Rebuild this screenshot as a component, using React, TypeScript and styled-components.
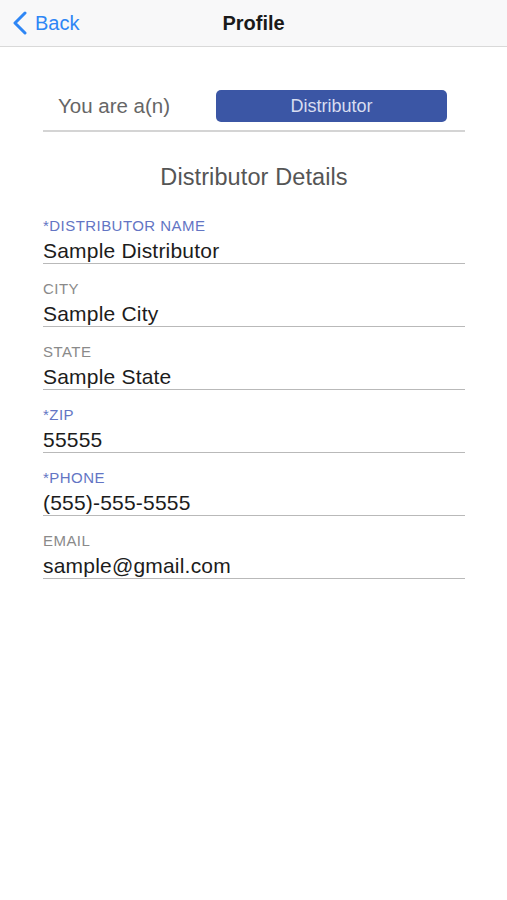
import React from "react"
import styled, { createGlobalStyle } from "styled-components"

const GlobalStyle = createGlobalStyle`
  body {
    margin: 0;
    background: #ffffff;
    font-family: "Liberation Sans", Arial, sans-serif;
  }
`

const Page = styled.div`
  width: 507px;
  min-height: 900px;
  background: #ffffff;
`

const NavBar = styled.div`
  height: 46px;
  background: #f8f8f9;
  border-bottom: 1px solid #d9d9d9;
  display: flex;
  align-items: center;
  position: relative;

  .back {
    display: flex;
    align-items: center;
    padding-left: 12px;
    color: #2e86f5;
    font-size: 20px;
    gap: 7px;
  }

  .title {
    position: absolute;
    left: 0;
    right: 0;
    text-align: center;
    font-size: 20px;
    font-weight: bold;
    color: #1a1a1a;
    pointer-events: none;
  }
`

const Content = styled.div`
  padding: 0 42px 0 43px;
`

const RoleRow = styled.div`
  margin-top: 43px;
  display: flex;
  align-items: center;
  padding: 0 18px 8px 15px;
  border-bottom: 2px solid #d4d4d4;

  .label {
    font-size: 20.5px;
    color: #666666;
  }
`

const RoleButton = styled.div`
  margin-left: auto;
  width: 231px;
  height: 32px;
  border-radius: 5px;
  background: #3b56a5;
  color: #d8ddf0;
  font-size: 18px;
  display: flex;
  align-items: center;
  justify-content: center;
`

const SectionTitle = styled.div`
  margin-top: 30px;
  margin-bottom: 25px;
  line-height: 30px;
  text-align: center;
  font-size: 23.5px;
  letter-spacing: 0.1px;
  color: #555555;
`

const Field = styled.div<{ required?: boolean }>`
  margin-bottom: 16px;
  border-bottom: 1px solid #b9b9b9;

  .label {
    height: 18px;
    line-height: 18px;
    font-size: 15px;
    letter-spacing: 0.45px;
    color: ${(props) => (props.required ? "#6375c4" : "#8a8a8a")};
  }

  .value {
    margin-top: 4px;
    height: 24px;
    line-height: 24px;
    font-size: 21px;
    color: #1c1c1c;
    letter-spacing: 0.2px;
  }
`

const fields = [
  { label: "*DISTRIBUTOR NAME", value: "Sample Distributor", required: true },
  { label: "CITY", value: "Sample City" },
  { label: "STATE", value: "Sample State" },
  { label: "*ZIP", value: "55555", required: true },
  { label: "*PHONE", value: "(555)-555-5555", required: true },
  { label: "EMAIL", value: "sample@gmail.com" },
]

const App = () => {
  return (
    <Page>
      <GlobalStyle />
      <NavBar>
        <div className="back">
          <svg width="16" height="24" viewBox="0 0 16 24">
            <path
              d="M13 2 L3 12 L13 22"
              fill="none"
              stroke="#2e86f5"
              strokeWidth="3"
              strokeLinecap="round"
              strokeLinejoin="round"
            />
          </svg>
          <span>Back</span>
        </div>
        <div className="title">Profile</div>
      </NavBar>
      <Content>
        <RoleRow>
          <div className="label">You are a(n)</div>
          <RoleButton>Distributor</RoleButton>
        </RoleRow>
        <SectionTitle>Distributor Details</SectionTitle>
        {fields.map((f) => (
          <Field key={f.label} required={f.required}>
            <div className="label">{f.label}</div>
            <div className="value">{f.value}</div>
          </Field>
        ))}
      </Content>
    </Page>
  )
}

export default App
